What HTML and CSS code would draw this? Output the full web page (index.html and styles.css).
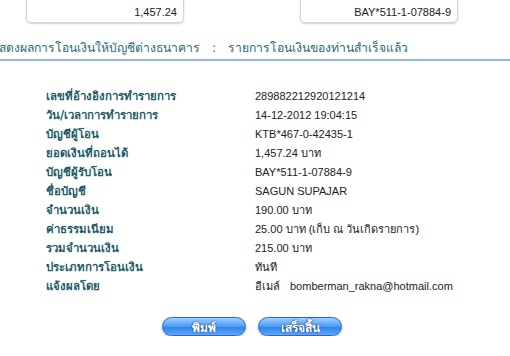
FILE: index.html
```html
<!DOCTYPE html>
<html lang="th">
<head>
    <meta charset="UTF-8">
    <title>ผลการโอนเงิน</title>
    <link rel="stylesheet" href="styles.css">
</head>
<body>
    <div class="cards">
        <div class="card">1,457.24</div>
        <div class="card">BAY*511-1-07884-9</div>
    </div>

    <h1 class="title">แสดงผลการโอนเงินให้บัญชีต่างธนาคาร<span class="sep">:</span>รายการโอนเงินของท่านสำเร็จแล้ว</h1>

    <table class="result">
        <tr><th>เลขที่อ้างอิงการทำรายการ</th><td>289882212920121214</td></tr>
        <tr><th>วัน/เวลาการทำรายการ</th><td>14-12-2012 19:04:15</td></tr>
        <tr><th>บัญชีผู้โอน</th><td>KTB*467-0-42435-1</td></tr>
        <tr><th>ยอดเงินที่ถอนได้</th><td>1,457.24 บาท</td></tr>
        <tr><th>บัญชีผู้รับโอน</th><td>BAY*511-1-07884-9</td></tr>
        <tr><th>ชื่อบัญชี</th><td>SAGUN SUPAJAR</td></tr>
        <tr><th>จำนวนเงิน</th><td>190.00 บาท</td></tr>
        <tr><th>ค่าธรรมเนียม</th><td>25.00 บาท (เก็บ ณ วันเกิดรายการ)</td></tr>
        <tr><th>รวมจำนวนเงิน</th><td>215.00 บาท</td></tr>
        <tr><th>ประเภทการโอนเงิน</th><td>ทันที</td></tr>
        <tr><th>แจ้งผลโดย</th><td>อีเมล์<span class="mail">bomberman_rakna@hotmail.com</span></td></tr>
    </table>

    <div class="actions">
        <button class="btn">พิมพ์</button>
        <button class="btn">เสร็จสิ้น</button>
    </div>
</body>
</html>
```

FILE: styles.css
```css
body {
    margin: 0;
    width: 510px;
    font-family: "Liberation Sans", "DejaVu Sans", sans-serif;
    font-size: 11px;
    color: #222;
    background: #fff;
    overflow: hidden;
}
.cards {
    display: flex;
    margin-top: -20px;
    padding-left: 26px;
    gap: 116px;
}
.card {
    width: 158px;
    height: 43px;
    box-sizing: border-box;
    padding: 25px 6px 0 0;
    text-align: right;
    border: 1px solid #d4d4d4;
    border-radius: 5px;
    box-shadow: 0 1px 2px rgba(0, 0, 0, 0.18);
}
.title {
    margin: 15px 0 0 -9px;
    padding-bottom: 2px;
    border-bottom: 2px solid #93b8e0;
    font-family: "DejaVu Sans", sans-serif;
    font-size: 12.2px;
    font-weight: normal;
    color: #2b6a76;
    white-space: nowrap;
}
.sep {
    margin: 0 12px;
}
.result {
    margin: 25px 0 0 46px;
    border-collapse: collapse;
}
.result th {
    width: 209px;
    height: 19px;
    padding: 0;
    text-align: left;
    font-family: "DejaVu Sans", sans-serif;
    font-size: 11.4px;
    font-weight: bold;
    color: #215b66;
}
.result td {
    padding: 0;
}
.mail {
    margin-left: 10px;
}
.actions {
    display: flex;
    justify-content: center;
    gap: 12px;
    margin-top: 22px;
    padding-right: 6px;
}
.btn {
    width: 84px;
    height: 19px;
    padding: 0;
    border: 1px solid #2c66c4;
    border-radius: 10px;
    background: linear-gradient(#9ed0ff, #4a9cf5 50%, #2f7fe8 51%, #5aa8ff);
    color: #fff;
    font-family: "DejaVu Sans", sans-serif;
    font-size: 12px;
    font-weight: bold;
    text-shadow: 0 0 2px #1a3c80, 0 0 1px #1a3c80;
    box-shadow: 0 1px 2px rgba(0, 0, 0, 0.3);
}
```
